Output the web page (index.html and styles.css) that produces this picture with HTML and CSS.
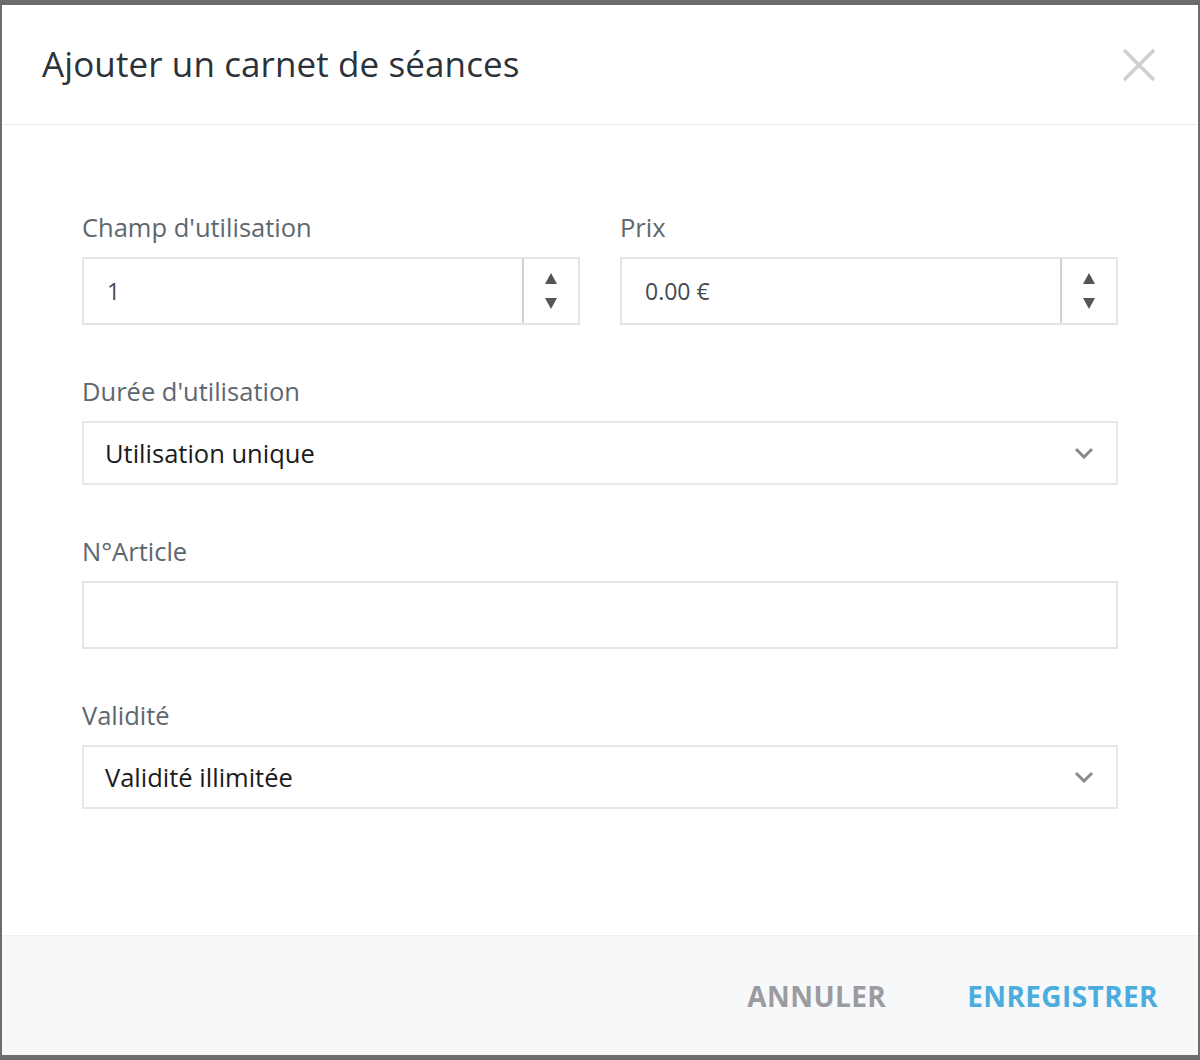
FILE: index.html
```html
<!DOCTYPE html>
<html lang="fr">
<head>
<meta charset="utf-8">
<title>Ajouter un carnet de séances</title>
<link rel="stylesheet" href="styles.css">
</head>
<body>
<div class="modal">
  <div class="modal-header">
    <h1 class="modal-title">Ajouter un carnet de séances</h1>
    <button class="close" aria-label="Fermer">
      <svg width="34" height="34" viewBox="0 0 34 34"><path d="M2 2 L32 32 M32 2 L2 32" stroke="#cfcfcf" stroke-width="3.4" fill="none"/></svg>
    </button>
  </div>
  <div class="modal-body">
    <div class="row">
      <div class="field">
        <label class="label">Champ d'utilisation</label>
        <div class="input number">
          <span class="value">1</span>
          <span class="spin">
            <svg width="14" height="36" viewBox="0 0 14 36"><path d="M7 0 L13 11 L1 11 Z" fill="#555"/><path d="M1 25 L13 25 L7 36 Z" fill="#555"/></svg>
          </span>
        </div>
      </div>
      <div class="field">
        <label class="label">Prix</label>
        <div class="input number">
          <span class="value">0.00 €</span>
          <span class="spin">
            <svg width="14" height="36" viewBox="0 0 14 36"><path d="M7 0 L13 11 L1 11 Z" fill="#555"/><path d="M1 25 L13 25 L7 36 Z" fill="#555"/></svg>
          </span>
        </div>
      </div>
    </div>
    <div class="field">
      <label class="label">Durée d'utilisation</label>
      <div class="select">
        <span class="sel-value">Utilisation unique</span>
        <svg class="chev" width="20" height="12" viewBox="0 0 20 12"><path d="M2 2 L10 10 L18 2" stroke="#8a8a8a" stroke-width="3" fill="none"/></svg>
      </div>
    </div>
    <div class="field">
      <label class="label">N°Article</label>
      <div class="input"></div>
    </div>
    <div class="field">
      <label class="label">Validité</label>
      <div class="select">
        <span class="sel-value">Validité illimitée</span>
        <svg class="chev" width="20" height="12" viewBox="0 0 20 12"><path d="M2 2 L10 10 L18 2" stroke="#8a8a8a" stroke-width="3" fill="none"/></svg>
      </div>
    </div>
  </div>
  <div class="modal-footer">
    <button class="btn btn-cancel">ANNULER</button>
    <button class="btn btn-save">ENREGISTRER</button>
  </div>
</div>
</body>
</html>
```
FILE: styles.css
```css
* { box-sizing: border-box; }
html, body { margin: 0; padding: 0; }
body {
  background: #6d6d70;
  font-family: "Open Sans", "Lato", sans-serif;
  height: 1060px;
  padding: 5px 2px 5px 2px;
}
.modal {
  background: #fff;
  height: 1050px;
  display: flex;
  flex-direction: column;
}
.modal-header {
  height: 120px;
  border-bottom: 1px solid #ececec;
  display: flex;
  align-items: center;
  justify-content: space-between;
  padding: 0 42px 0 40px;
}
.modal-title {
  margin: 0;
  font-weight: 400;
  font-size: 35px;
  line-height: 40px;
  color: #2b323a;
  padding-bottom: 2px;
  letter-spacing: 0.1px;
}
.close {
  background: none;
  border: 0;
  padding: 0;
  display: flex;
}
.modal-body {
  flex: 1;
  padding: 87px 80px 0 80px;
}
.row {
  display: grid;
  grid-template-columns: 1fr 1fr;
  gap: 40px;
}
.field { margin-bottom: 51px; }
.label {
  display: block;
  font-size: 25.5px;
  line-height: 30px;
  color: #5d6770;
  margin-bottom: 15px;
}
.input {
  height: 68px;
  border: 2px solid #e1e6e9;
  display: flex;
  align-items: center;
}
.number .value {
  flex: 1;
  padding-left: 23px;
  font-size: 23px;
  color: #444a50;
}
.spin {
  width: 56px;
  height: 100%;
  border-left: 2px solid #d2d2d2;
  display: flex;
  align-items: center;
  justify-content: center;
}
.select {
  height: 64px;
  border: 2px solid #e8e8e8;
  display: flex;
  align-items: center;
  justify-content: space-between;
  padding: 0 22px 0 21px;
}
.sel-value {
  font-size: 25.5px;
  color: #1b1b1b;
}
.modal-footer {
  height: 120px;
  background: #f7f8fa;
  border-top: 1px solid #eeeff1;
  display: flex;
  align-items: center;
  justify-content: flex-end;
  gap: 81px;
  padding: 0 40px 0 0;
}
.btn {
  background: none;
  border: 0;
  padding: 0;
  font-family: "Open Sans", "Lato", sans-serif;
  font-weight: 700;
  font-size: 28px;
  letter-spacing: 0.4px;
}
.btn-cancel { color: #9b9ba0; }
.btn-save { color: #4badde; }
```
